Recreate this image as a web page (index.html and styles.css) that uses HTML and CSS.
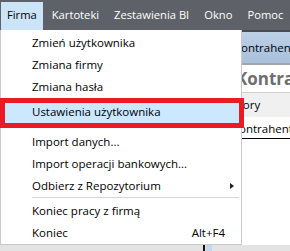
FILE: index.html
```html
<!DOCTYPE html>
<html lang="pl">
<head>
    <meta charset="UTF-8">
    <meta name="viewport" content="width=device-width, initial-scale=1.0">
    <title>Firma menu</title>
    <link rel="stylesheet" href="styles.css">
</head>
<body>
    <div class="menubar">
        <span class="menubar-item active">Firma</span>
        <span class="menubar-item">Kartoteki</span>
        <span class="menubar-item">Zestawienia BI</span>
        <span class="menubar-item">Okno</span>
        <span class="menubar-item">Pomoc</span>
    </div>

    <div class="workspace">
        <div class="tab-strip"><span class="tab-label">Kontrahenci</span></div>
        <div class="page-title">Kontrahenci</div>
        <div class="filter-bar">Kolory</div>
        <div class="list-header">Kontrahent</div>
        <div class="list-body"></div>
        <div class="status-strip">
            <span class="splitter"></span>
            <span class="thumb"></span>
        </div>
    </div>

    <div class="dropdown">
        <div class="menu-item">Zmień użytkownika</div>
        <div class="menu-item">Zmiana firmy</div>
        <div class="menu-item">Zmiana hasła</div>
        <div class="menu-sep small"></div>
        <div class="menu-item hovered">Ustawienia użytkownika</div>
        <div class="menu-sep"></div>
        <div class="menu-item">Import danych...</div>
        <div class="menu-item">Import operacji bankowych...</div>
        <div class="menu-item">Odbierz z Repozytorium <span class="submenu-arrow"></span></div>
        <div class="menu-sep small"><span class="sep-line"></span></div>
        <div class="menu-item">Koniec pracy z firmą</div>
        <div class="menu-item">Koniec <span class="shortcut">Alt+F4</span></div>
    </div>

    <!-- red highlight drawn over the screenshot -->
    <div class="annotation"></div>
</body>
</html>
```

FILE: styles.css
```css
* {
    box-sizing: border-box;
}
body {
    margin: 0;
    width: 290px;
    height: 251px;
    overflow: hidden;
    position: relative;
    font-family: "Open Sans", "Noto Sans", sans-serif;
    font-size: 11.5px;
    color: #000;
    background-color: #fff;
}
.menubar {
    display: flex;
    gap: 3px;
    height: 32px;
    padding: 2px 0 0 1px;
    overflow: hidden;
    background-color: #5e6268;
    border-bottom: 2px solid #484b50;
}
.menubar-item {
    flex-shrink: 0;
    white-space: nowrap;
    padding: 0 6px;
    line-height: 26px;
    font-size: 11.2px;
    color: #fff;
}
.menubar-item.active {
    background-color: #cce4f7;
    color: #000;
}
.workspace {
    display: flex;
    flex-direction: column;
    height: 219px;
    white-space: nowrap;
    overflow: hidden;
}
.tab-strip {
    height: 33px;
    padding-left: 234px;
    line-height: 31px;
    background: linear-gradient(#bdd1e7, #a8c0dc);
    border-bottom: 2px solid #a5a5a5;
}
.page-title {
    height: 28px;
    padding-left: 236px;
    line-height: 28px;
    font-size: 17px;
    font-weight: bold;
    color: #6e6e6e;
    border-bottom: 1px solid #d2d2d2;
}
.filter-bar {
    height: 24px;
    padding-left: 226px;
    line-height: 24px;
    background-color: #f0f0f0;
}
.list-header {
    height: 22px;
    padding-left: 232px;
    line-height: 24px;
    border-bottom: 1px solid #000;
}
.list-body {
    flex: 1;
}
.status-strip {
    display: flex;
    height: 6px;
    background-color: #e3e3e3;
    padding-left: 203px;
}
.splitter {
    width: 2px;
    background-color: #111;
}
.thumb {
    width: 6px;
    margin-left: 1px;
    background-color: #c3d7ee;
}
.dropdown {
    position: absolute;
    left: 0;
    top: 30px;
    width: 242px;
    height: 215px;
    padding-top: 2px;
    background-color: #fff;
    border: 1px solid #cacaca;
    border-top: none;
}
.menu-item {
    position: relative;
    height: 22px;
    line-height: 22px;
    padding-left: 31px;
}
.menu-item.hovered {
    background-color: #cce8ff;
}
.menu-sep {
    height: 8px;
}
.menu-sep.small {
    height: 3px;
    position: relative;
}
.sep-line {
    position: absolute;
    left: 31px;
    right: 2px;
    top: 0;
    border-top: 1px solid #d7d7d7;
}
.shortcut {
    position: absolute;
    right: 16px;
}
.submenu-arrow {
    position: absolute;
    right: 7px;
    top: 8px;
    border-left: 4px solid #222;
    border-top: 3px solid transparent;
    border-bottom: 3px solid transparent;
}
.annotation {
    position: absolute;
    left: 0;
    top: 98px;
    width: 244px;
    height: 30px;
    border: 5px solid #ea1b25;
}
```
